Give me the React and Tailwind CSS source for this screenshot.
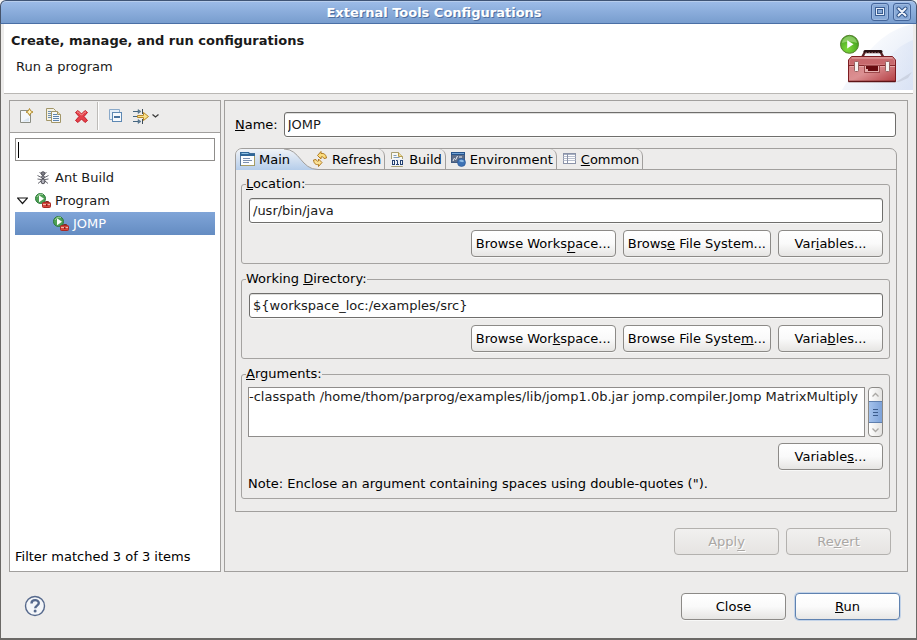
import React from "react";

/* ---------- shared pieces ---------- */

function Mnemonic({ text }) {
  // "&" marks the access key of a label
  const at = text.indexOf("&");
  if (at < 0) return <span className="whitespace-pre">{text}</span>;
  const key = text[at + 1];
  const low = "gjpqy".includes(key);
  return (
    <span className="whitespace-pre">
      {text.slice(0, at)}
      <u className={low ? "underline decoration-1 underline-offset-4 [text-decoration-skip-ink:none]" : "underline decoration-1 underline-offset-1 [text-decoration-skip-ink:none]"}>
        {key}
      </u>
      {text.slice(at + 2)}
    </span>
  );
}

function PushButton({ label, primary, disabled, wide }) {
  const look = disabled
    ? "border-[#b3b1ae] bg-linear-to-b from-[#f1f0ef] to-[#e6e4e2] text-[#aaa7a4] [text-shadow:1px_1px_0_#ffffff]"
    : primary
      ? "border-[#5f82b0] bg-linear-to-b from-white via-[#fbfbfb] to-[#e8e7e5] shadow-[0_0_0_1px_#c3d3e8]"
      : "border-[#8c8a87] bg-linear-to-b from-white via-[#fafafa] to-[#e6e5e3] shadow-[0_1px_0_#f8f8f7]";
  return (
    <button
      type="button"
      disabled={disabled}
      className={`h-[27px] rounded-sm border text-center ${wide ? "px-1" : "w-[105px]"} ${look}`}
    >
      <Mnemonic text={label} />
    </button>
  );
}

const field =
  "block h-[25px] w-full min-w-0 rounded-[3px] border border-[#6f6e6c] bg-white px-[3px] text-[#1a1a1a] shadow-[0_1px_0_#f8f8f7,inset_0_1px_0_#dededc] outline-none";

function Group({ legend, htmlFor, children }) {
  return (
    <fieldset className="min-w-0 rounded-[3px] border border-[#a5a3a1] px-[6px] pb-[6px]">
      <legend className="-ml-[2px] h-4 leading-4">
        <label htmlFor={htmlFor}>
          <Mnemonic text={legend} />
        </label>
      </legend>
      {children}
    </fieldset>
  );
}

/* ---------- icons ---------- */

const NewIcon = () => (
  <svg width="16" height="16" viewBox="0 0 16 16">
    <path d="M2.500 2.500h8l2 3v9h-10z" fill="#f4f7fb" stroke="#8b8d83" />
    <path d="M4 13.500h7v-4z" fill="#d9e6f1" />
    <path d="M11.500 .5l1.200 2.300 2.300 1.200-2.300 1.200-1.200 2.300-1.200-2.300L8 4l2.300-1.200z" fill="#fbe38a" stroke="#ad842b" strokeWidth=".9" />
    <path d="M11.500 2.500v3M10 4h3" stroke="#fff7cf" />
  </svg>
);

const CopyIcon = () => (
  <svg width="16" height="16" viewBox="0 0 16 16">
    <path d="M.5.500h7l2 2v10h-9z" fill="#f4f1e4" stroke="#a29668" />
    <path d="M2 3.500h4M2 5.500h3M2 7.500h3M2 9.500h3" stroke="#6c8fb5" />
    <path d="M5.500 3.500h6l3 3v8h-9z" fill="#f6f8fb" stroke="#a29668" />
    <path d="M11.500 3.500v3h3" fill="#eadfae" stroke="#a29668" />
    <path d="M7 6.500h4M7 8.500h6M7 10.500h6M7 12.500h6" stroke="#5c83ad" />
  </svg>
);

const DeleteIcon = () => (
  <svg width="16" height="16" viewBox="0 0 16 16">
    <path d="M1.500 4.500L4 2.500l3.500 3.500L11 2.500l2.500 2L10 8.500l3.500 4-2.500 2L7.500 11 4 14.500l-2.500-2L5 8.500z" fill="#e5404a" stroke="#c21f2a" strokeLinejoin="round" />
    <path d="M3 4.500l1-.8 3.500 3.500L11 3.700l1 .8" fill="none" stroke="#f59a95" />
  </svg>
);

const CollapseIcon = () => (
  <svg width="16" height="16" viewBox="0 0 16 16">
    <path d="M1.500 1.500h10v10h-10z" fill="#e3edf7" stroke="#8aa9c9" />
    <rect x="4.500" y="4.500" width="9" height="9" fill="#f5f9fd" stroke="#5d88b3" />
    <path d="M6 9h6" stroke="#1c4f86" strokeWidth="1.600" />
  </svg>
);

const FilterIcon = () => (
  <svg width="28" height="16" viewBox="0 0 28 16">
    <path d="M1 3.500h7M1 13.500h7" stroke="#44657f" />
    <path d="M6 1.500l3 2-3 2zM6 11.500l3 2-3 2z" fill="#5d7d96" stroke="#44657f" strokeWidth=".5" />
    <path d="M10.500 1v5M10.500 11v5" stroke="#3d4c58" />
    <path d="M1 8.500h4" stroke="#44657f" />
    <path d="M5.500 7.500h6v-3l5 4-5 4v-3h-6z" fill="#fbe28a" stroke="#b8892a" />
    <path d="M20.500 6.500l3 2.500 3-2.500" fill="none" stroke="#3a3a3a" strokeWidth="1.300" />
  </svg>
);

const AntIcon = () => (
  <svg width="16" height="16" viewBox="0 0 16 16">
    <path d="M4.500 2.500l2 1M11.500 2.500l-2 1M2.500 5.500l4 2M13.500 5.500l-4 2M2.500 9L6 9.500M13.500 9L10 9.500M3 13.500l3-2.500M13 13.500L10 11" stroke="#66666f" strokeWidth="1" fill="none" />
    <ellipse cx="8" cy="3.500" rx="1.800" ry="1.800" fill="#83838c" stroke="#3c3c44" strokeWidth=".8" />
    <ellipse cx="8" cy="7.200" rx="1.400" ry="1.600" fill="#9c9ca6" stroke="#3c3c44" strokeWidth=".8" />
    <ellipse cx="8" cy="11.300" rx="2" ry="2.500" fill="#8e8e99" stroke="#3c3c44" strokeWidth=".8" />
    <path d="M8 10v3" stroke="#d0d0d8" />
  </svg>
);

const ProgramIcon = () => (
  <svg width="16" height="16" viewBox="0 0 16 16">
    <circle cx="5.500" cy="5.500" r="5" fill="#4da053" stroke="#2c7a3c" />
    <path d="M2 4a5 5 0 0 1 6-2.500" stroke="#a7d3a1" fill="none" />
    <path d="M4 2.300l5 3.500-5 3.500z" fill="#fff" />
    <path d="M10.500 9.500V8.500h3v1" stroke="#7d2a20" fill="none" />
    <rect x="7.500" y="9.500" width="8" height="5" rx="1" fill="#d8483f" stroke="#a82a24" />
    <path d="M8 11.500h7" stroke="#f0b5a8" />
    <path d="M11 11h1.500v2H11z" fill="#8b1d18" />
  </svg>
);

const MainIcon = () => (
  <svg width="16" height="16" viewBox="0 0 16 16">
    <rect x=".5" y="2.500" width="14" height="12" fill="#fbfdff" stroke="#56789c" />
    <path d="M0 1h9l1 1.500h5V5H0z" fill="#2f6698" />
    <path d="M1.500 2.500h7" stroke="#8fc1e4" />
    <path d="M3 7.500h7M3 9.500h9M3 11.500h6" stroke="#7b90b0" />
    <path d="M14.500 5v9.500H1" fill="none" stroke="#a99d62" />
  </svg>
);

const RefreshIcon = () => (
  <svg width="16" height="16" viewBox="0 0 16 16">
    <path d="M5.500 4.500L9 .500v2c3-.5 5 1 5.500 4.500l-2.500.5C11.500 6 10.500 5.500 9 6v2z" fill="#fbdc7c" stroke="#b07a22" strokeLinejoin="round" />
    <path d="M10 11.500L6.500 15.500v-2C3.500 14 2 12.500 1.500 9L4 8.500c.5 1.500 1.200 2 2.500 1.500V8z" fill="#fbe193" stroke="#b07a22" strokeLinejoin="round" />
  </svg>
);

const BuildIcon = () => (
  <svg width="16" height="16" viewBox="0 0 16 16">
    <path d="M2.500 1.500h7l4 4v10h-11z" fill="#f9f9f3" stroke="#a8a074" />
    <path d="M9.500 1.500v4h4" fill="#f0dc9a" stroke="#b59b4c" />
    <path d="M4.500 4.500h3M4.500 6.500h6" stroke="#7f9cbc" />
    <rect x="2" y="8" width="12" height="7" fill="#eef2f8" />
    <rect x="3.500" y="9.500" width="2" height="4" fill="none" stroke="#23406f" />
    <path d="M7 9.500h1.500V14M7 13.500h3" fill="none" stroke="#23406f" />
    <rect x="11.500" y="9.500" width="2" height="4" fill="none" stroke="#23406f" />
  </svg>
);

const EnvironmentIcon = () => (
  <svg width="16" height="16" viewBox="0 0 16 16">
    <rect x="1" y="1" width="14" height="11" fill="#405a80" />
    <path d="M1 2.500h14" stroke="#26548c" strokeWidth="3" />
    <path d="M2 2.500h12" stroke="#72a2d4" />
    <rect x="2" y="4" width="12" height="7" fill="#5d6d88" />
    <path d="M3 10l1.500-3M5.500 9l2-4M9 6h3" stroke="#eef2f8" />
    <circle cx="11.500" cy="11.500" r="4" fill="#3d72b5" stroke="#265391" strokeWidth=".6" />
    <path d="M9 10c1.500-2 3.500-1.500 5 0-1 2-3 1-5 0" fill="#8ebbe4" />
  </svg>
);

const CommonIcon = () => (
  <svg width="16" height="16" viewBox="0 0 16 16">
    <rect x="2.500" y="2.500" width="12" height="10" fill="#fff" stroke="#8b93a8" />
    <path d="M3 3.500h11" stroke="#a7b0c3" />
    <path d="M2.500 5.500h12M2.500 7.500h12M2.500 9.500h12" stroke="#b8bfce" />
    <path d="M6.500 2.500v10" stroke="#8b93a8" />
  </svg>
);

const ToolboxArt = () => (
  <svg width="77" height="66" viewBox="836 24 77 66" className="shrink-0">
    <defs>
      <linearGradient id="sky" x1="0" y1="0" x2="1" y2=".9">
        <stop offset=".2" stopColor="#ffffff" />
        <stop offset="1" stopColor="#dfe7f6" />
      </linearGradient>
      <linearGradient id="band" x1="0" y1="0" x2="1" y2="0">
        <stop offset="0" stopColor="#dde5f6" stopOpacity="0" />
        <stop offset="1" stopColor="#d6e0f4" />
      </linearGradient>
      <linearGradient id="steel" x1="0" y1="0" x2="1" y2="1">
        <stop offset="0" stopColor="#d07a7d" />
        <stop offset=".5" stopColor="#dc9092" />
        <stop offset="1" stopColor="#b33d42" />
      </linearGradient>
      <radialGradient id="ball" cx=".4" cy=".75" r=".8">
        <stop offset="0" stopColor="#7fdb3a" />
        <stop offset="1" stopColor="#38941a" />
      </radialGradient>
    </defs>
    <path d="M913 24C886 30 868 46 842 90h71z" fill="url(#sky)" />
    <path d="M913 40C888 50 880 70 870 90h43z" fill="url(#band)" opacity=".5" />
    <path d="M896 82l16-10-4 6-9 4z" fill="#b9bfce" opacity=".5" />
    <path d="M862.500 56.500l2.500-4.500h15.500l2.500 4.500" fill="none" stroke="#5b2427" strokeWidth="2.400" />
    <path d="M865 51.500h16" stroke="#2b1113" strokeWidth="3" strokeLinecap="round" />
    <path d="M865.500 52.500h15" stroke="#7d5052" strokeWidth="1" strokeDasharray="1.500 1.500" />
    <path d="M848.500 81.500V60l3-3.500h41l3 3.500v21.500z" fill="url(#steel)" stroke="#7c1c21" />
    <path d="M850 60.500l2.500-3h39l2.500 3v4h-44z" fill="#c7686c" />
    <path d="M852 58h40" stroke="#e5b0b0" />
    <path d="M849 65.500h46" stroke="#86282c" />
    <path d="M850 66.500h45" stroke="#e7aaaa" />
    <path d="M848.500 81.500h47" stroke="#5c1216" strokeWidth="1.500" />
    <rect x="864.500" y="65.500" width="15" height="7" fill="#e7b1b0" stroke="#9c4a4c" />
    <rect x="866" y="66" width="12" height="3" fill="#680b10" />
    <rect x="868" y="69" width="10" height="2" fill="#680b10" />
    <rect x="854.500" y="61.500" width="4" height="10" rx="1" fill="#f4f4f2" stroke="#96605f" />
    <rect x="885.500" y="61.500" width="4" height="10" rx="1" fill="#f4f4f2" stroke="#96605f" />
    <circle cx="849.500" cy="44.300" r="9" fill="url(#ball)" stroke="#58822f" />
    <path d="M842 43c1-9 14-9 15 0-5-2-10-2-15 0z" fill="#c5eda0" opacity=".5" />
    <path d="M847.200 40.200l6.300 4-6.300 4.300z" fill="#fff" />
  </svg>
);

/* ---------- window parts ---------- */

function TitleBar() {
  const box =
    "flex size-[18px] items-center justify-center rounded-[3px] border border-[#44659a] bg-[#88aad8] shadow-[inset_0_0_0_1px_#9db9e0]";
  return (
    <header className="flex h-6 items-center gap-1 rounded-t-md border border-b-[#4a6fa5] border-x-[#45536b] border-t-[#3f5475] bg-linear-to-b from-[#9dbce8] to-[#789dce] pr-[5px] shadow-[inset_0_1px_0_#b7cdec]">
      <h1 className="flex-1 text-center font-bold text-white [text-shadow:1px_1px_0_#4f6f9f]">External Tools Configurations</h1>
      <button type="button" aria-label="Maximize" className={box}>
        <svg width="10" height="10" viewBox="0 0 10 10">
          <rect x="1.500" y="1.500" width="7" height="6" fill="none" stroke="#34578b" strokeWidth="2.800" />
          <rect x="1.500" y="1.500" width="7" height="6" fill="none" stroke="#e6eefa" />
        </svg>
      </button>
      <button type="button" aria-label="Close window" className={box}>
        <svg width="12" height="12" viewBox="0 0 12 12">
          <path d="M2.500 2.500l7 7M9.500 2.500l-7 7" stroke="#34578b" strokeWidth="4" strokeLinecap="round" />
          <path d="M2.500 2.500l7 7M9.500 2.500l-7 7" stroke="#f0f5fc" strokeWidth="2" strokeLinecap="round" />
        </svg>
      </button>
    </header>
  );
}

function Sidebar() {
  const tool = "flex h-full w-7 items-center justify-center";
  return (
    <section className="flex w-[212px] shrink-0 flex-col border border-[#a19f9d] bg-white">
      <div className="flex h-8 items-center border-b border-[#a19f9d] bg-[#edeceb] pb-px pl-[2px]">
        <button type="button" aria-label="New" className={tool}><NewIcon /></button>
        <button type="button" aria-label="Duplicate" className={tool}><CopyIcon /></button>
        <button type="button" aria-label="Delete" className={tool}><DeleteIcon /></button>
        <span className="ml-px h-7 w-[2px] border-l border-[#bdbbb8] bg-white" />
        <button type="button" aria-label="Collapse all" className={`${tool} ml-[3px]`}><CollapseIcon /></button>
        <button type="button" aria-label="Filter" className="ml-[2px] flex h-full items-center"><FilterIcon /></button>
      </div>
      <div className="relative mx-[5px] mt-[5px]">
        <input aria-label="Filter text" className="block h-[23px] w-full border border-[#8f8d8b] bg-white px-1 outline-none" />
        <span className="absolute top-1 left-[3px] h-4 w-px bg-black" />
      </div>
      <ul role="tree" className="mx-[5px] mt-[5px] flex-1 text-[#1a1a1a]">
        <li role="treeitem" className="flex h-[23px] items-center gap-1 pl-5"><AntIcon />Ant Build</li>
        <li role="treeitem" aria-expanded="true" className="flex h-[23px] items-center pl-[2px]">
          <svg width="11" height="8" viewBox="0 0 11 8" className="mr-[7px]"><path d="M.500 1h10L5.500 6.500z" fill="#fff" stroke="#1a1a1a" strokeWidth="1.200" /></svg>
          <ProgramIcon /><span className="pl-1">Program</span>
        </li>
        <li role="treeitem" aria-selected="true" className="flex h-[23px] items-center gap-1 bg-linear-to-b from-[#80a5d8] to-[#648cc2] pl-[38px] text-white">
          <ProgramIcon />JOMP
        </li>
      </ul>
      <p className="px-[5px] pb-[6px] leading-4 text-black">Filter matched 3 of 3 items</p>
    </section>
  );
}

function Tab({ icon, label, selected }) {
  if (selected) {
    return (
      <button type="button" role="tab" aria-selected="true" className="relative flex h-full items-center gap-[3px] pr-[18px] pl-1">
        <svg className="absolute top-0 left-0 h-[22px] w-[82px]" viewBox="0 0 82 22">
          <defs>
            <linearGradient id="tabfill" x1="0" y1="0" x2="0" y2="1">
              <stop offset="0" stopColor="#f0f3f7" />
              <stop offset="1" stopColor="#b5cdea" />
            </linearGradient>
          </defs>
          <path d="M0 21V7Q0 0 7 0h41c16 0 17 20.500 34 20.500v.5z" fill="url(#tabfill)" />
          <path d="M48 0c16 0 17 20.500 34 20.500" fill="none" stroke="#a19f9d" />
        </svg>
        <span className="relative">{icon}</span>
        <span className="relative"><Mnemonic text={label} /></span>
      </button>
    );
  }
  return (
    <button type="button" role="tab" aria-selected="false" className="flex h-full items-center gap-1 rounded-tr-[7px] border-r border-[#a19f9d] pr-[3px] pl-1">
      <span className="relative">{icon}</span>
      <Mnemonic text={label} />
    </button>
  );
}

function BrowseRow({ a, b, c }) {
  return (
    <div className="mt-[7px] flex justify-end gap-[7px]">
      <PushButton label={a} wide />
      <PushButton label={b} wide />
      <PushButton label={c} />
    </div>
  );
}

function ScrollBar() {
  return (
    <div aria-hidden="true" className="flex w-[15px] shrink-0 flex-col overflow-hidden rounded-[4px] border border-[#8c8a87] bg-linear-to-r from-white to-[#e4e3e1]">
      <span className="flex h-[13px] items-center justify-center">
        <svg width="9" height="6" viewBox="0 0 9 6"><path d="M1.500 4.500l3-3 3 3" fill="none" stroke="#aaa8a5" strokeWidth="1.300" /></svg>
      </span>
      <span className="flex flex-1 flex-col items-center justify-center gap-[2px] border-y border-[#5f7fae] bg-linear-to-r from-[#a4c2ec] to-[#7da2d8]">
        <i className="h-px w-[5px] bg-[#3b5c8c]" />
        <i className="h-px w-[5px] bg-[#3b5c8c]" />
        <i className="h-px w-[5px] bg-[#3b5c8c]" />
      </span>
      <span className="flex h-[13px] items-center justify-center">
        <svg width="9" height="6" viewBox="0 0 9 6"><path d="M1.500 1.500l3 3 3-3" fill="none" stroke="#aaa8a5" strokeWidth="1.300" /></svg>
      </span>
    </div>
  );
}

function Editor() {
  return (
    <section className="flex min-w-0 flex-1 flex-col border border-[#a19f9d] px-[10px] pt-[11px]">
      <div className="flex items-center gap-[6px] pr-px">
        <label htmlFor="name"><Mnemonic text="&Name:" /></label>
        <input id="name" defaultValue="JOMP" className={field} />
      </div>

      <div className="mt-[11px] rounded-t-[7px] border border-[#a19f9d]">
        <div role="tablist" className="flex h-[21px] border-b border-[#a19f9d]">
          <Tab selected icon={<MainIcon />} label="Main" />
          <Tab icon={<RefreshIcon />} label="Refresh" />
          <Tab icon={<BuildIcon />} label="Build" />
          <Tab icon={<EnvironmentIcon />} label="Environment" />
          <Tab icon={<CommonIcon />} label="&Common" />
        </div>

        <div className="flex flex-col gap-[7px] pt-[6px] pr-[6px] pb-3 pl-[5px]">
          <Group legend="&Location:" htmlFor="location">
            <div className="pt-[6px] pl-px">
              <input id="location" defaultValue="/usr/bin/java" className={field} />
            </div>
            <BrowseRow a="Browse Works&pace..." b="Brows&e File System..." c="Var&iables..." />
          </Group>
          <Group legend="Working &Directory:" htmlFor="workdir">
            <div className="pt-[6px] pl-px">
              <input id="workdir" defaultValue="${workspace_loc:/examples/src}" className={field} />
            </div>
            <BrowseRow a="Browse Wor&kspace..." b="Browse File Syste&m..." c="Varia&bles..." />
          </Group>
          <Group legend="&Arguments:" htmlFor="arguments">
            <div className="flex gap-[3px] pt-[5px]">
              <textarea
                id="arguments"
                defaultValue="-classpath /home/thom/parprog/examples/lib/jomp1.0b.jar jomp.compiler.Jomp MatrixMultiply"
                className="h-[50px] min-w-0 flex-1 resize-none overflow-hidden border border-[#8f8d8b] bg-white leading-[17px] text-[#1a1a1a] outline-none"
              />
              <ScrollBar />
            </div>
            <div className="mt-[6px] flex justify-end">
              <PushButton label="Variable&s..." />
            </div>
            <p className="mt-[5px] leading-[17px]">Note: Enclose an argument containing spaces using double-quotes (").</p>
          </Group>
        </div>
      </div>

      <div className="mt-4 flex justify-end gap-[7px] px-[6px] pb-4">
        <PushButton label="Appl&y" disabled />
        <PushButton label="Re&vert" disabled />
      </div>
    </section>
  );
}

export default function App() {
  return (
    <div className="flex min-h-screen flex-col bg-[#f4f4f4] font-['DejaVu_Sans',sans-serif] text-[13px] leading-[17px] text-black">
      <TitleBar />
      <div className="flex flex-1 flex-col border-x border-b-2 border-[#6b6966] bg-[#edeceb] px-[3px]">
        <div className="flex h-[70px] justify-between border-b border-[#b9b7b4] bg-white">
          <div className="pt-2 pl-[7px] text-[#1a1a1a]">
            <h2 className="font-bold">Create, manage, and run configurations</h2>
            <p className="mt-[9px] pl-[5px]">Run a program</p>
          </div>
          <ToolboxArt />
        </div>

        <main className="flex flex-1 gap-[3px] px-[5px] pt-[6px]">
          <Sidebar />
          <Editor />
        </main>

        <footer className="flex items-center gap-[9px] pt-[21px] pr-[13px] pb-[18px] pl-5">
          <button type="button" aria-label="Help" className="mr-auto">
            <svg width="22" height="24" viewBox="0 0 22 24" className="block">
              <circle cx="11" cy="11" r="9.500" fill="#f4f6f9" stroke="#56698c" strokeWidth="1.400" />
              <path d="M7.500 8.500c0-4.500 7.300-4.300 7.300-.4 0 2.500-3.600 2.600-3.600 5.200" fill="none" stroke="#56698c" strokeWidth="2.400" />
              <circle cx="11.100" cy="16" r="1.500" fill="#56698c" />
            </svg>
          </button>
          <PushButton label="Close" />
          <PushButton label="&Run" primary />
        </footer>
      </div>
    </div>
  );
}
